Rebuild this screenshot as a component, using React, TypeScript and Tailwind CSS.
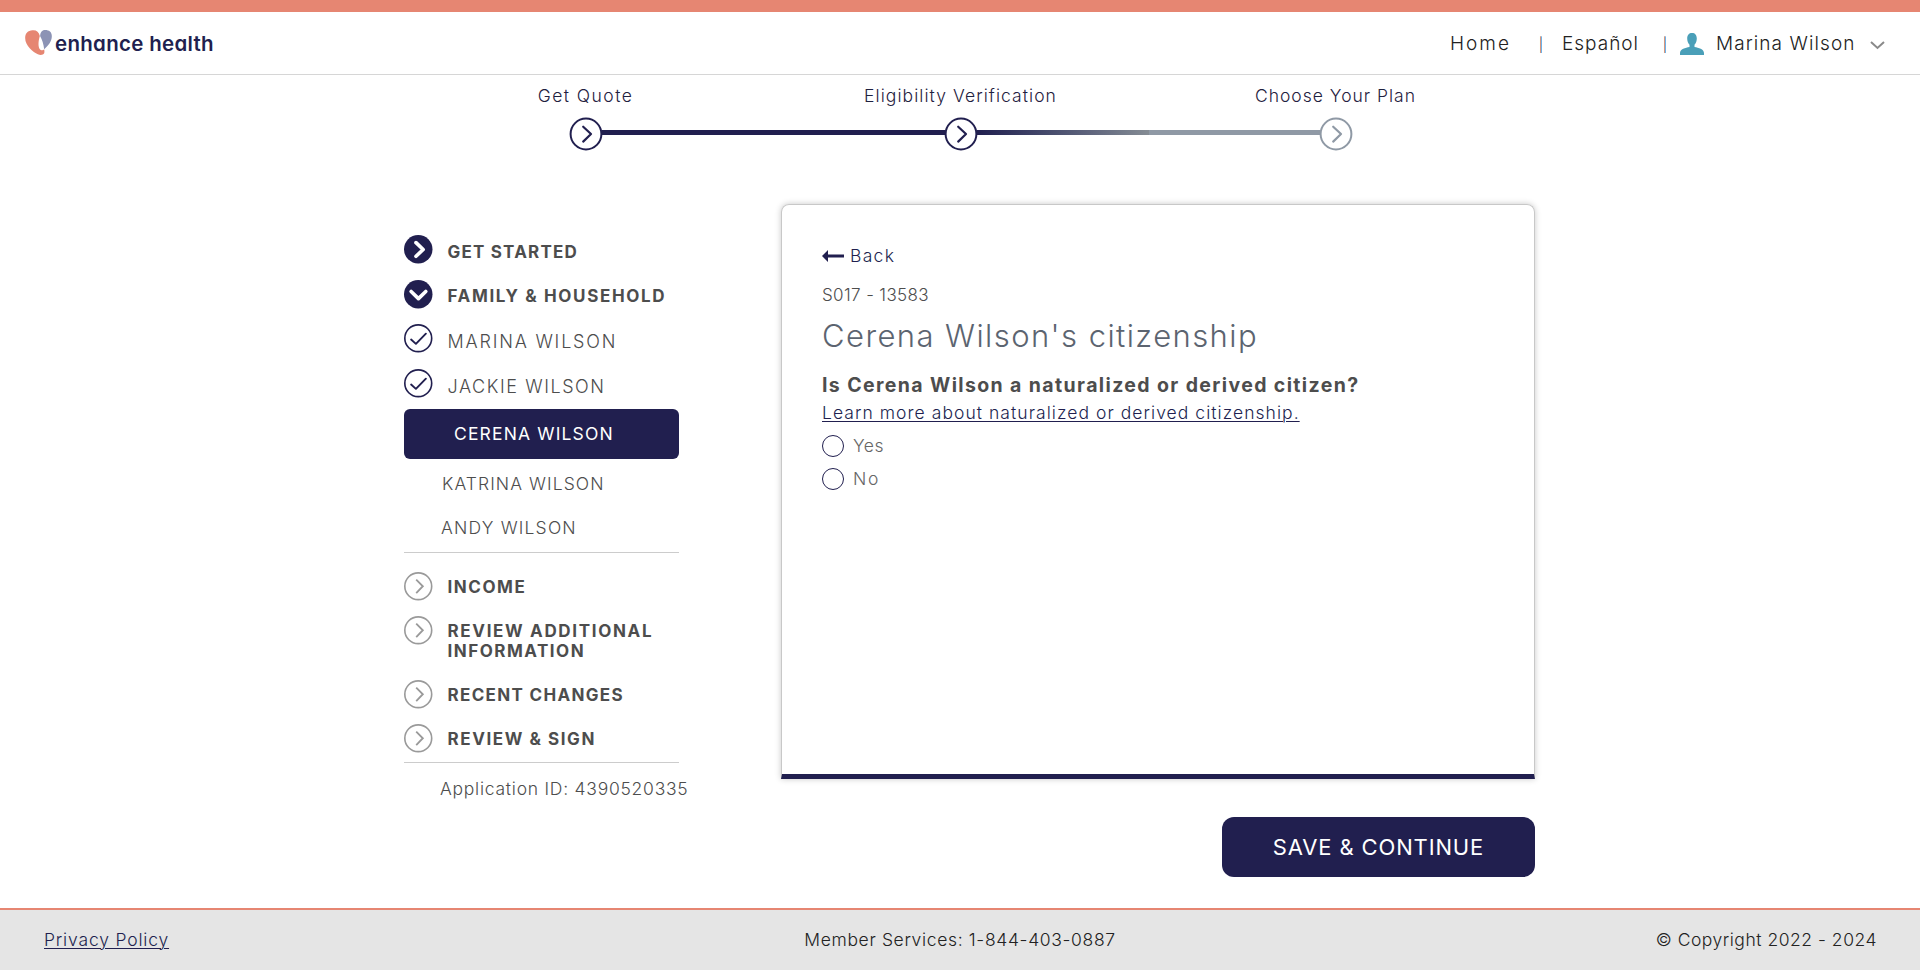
import type { ReactNode } from "react";

function Logo() {
  return (
    <div className="ml-[25px] flex items-center">
      <svg width="27" height="25" viewBox="0 0 80 75" className="mb-[2px] shrink-0">
        <path d="M22 1C8 2 0 10 0 24c0 24 24 42 38 49 8 3 16 2 19-3 1-4 1-7 0-12-3 4-10 4-14-2-5-9-3-25 1-38C41 6 34 0 22 1Z" fill="#e68672" />
        <path d="M60 0C50 0 45 8 45 19c6 10 10 24 12 39C70 46 80 34 80 18 80 6 72 0 60 0Z" fill="#8c93b5" />
      </svg>
      <span className="ml-[3px] pt-px text-[20.5px] leading-6 font-semibold tracking-[0.3px] text-[#211f4f] [font-feature-settings:'cv11']">
        enhance health
      </span>
    </div>
  );
}

function Header() {
  return (
    <header className="flex h-[63px] items-center justify-between border-b border-[#d6d6d6] text-[18.5px] font-light text-[#222]">
      <Logo />
      <nav className="mr-[35px] flex items-center whitespace-nowrap">
        <a className="w-[88px] pt-[2px] text-[19px] tracking-[2px]">Home</a>
        <span className="flex w-[6px] justify-center pt-[2px] text-[14px] text-[#211f4f]">|</span>
        <a className="ml-[18px] w-[100px] pt-[2px] text-[19px] tracking-[1px]">Español</a>
        <span className="flex w-[6px] justify-center pt-[2px] text-[14px] text-[#211f4f]">|</span>
        <svg width="24" height="22" viewBox="0 0 24 22" className="mt-[2px] ml-[12px]">
          <path d="M12 0c3 0 4.800 2 4.800 5.500 0 2.500-.8 4.700-2.300 6.300v2.200c4 .9 9.500 2 9.500 6V22H0v-2c0-4 5.500-5.100 9.500-6v-2.200C8 10.200 7.200 8 7.200 5.500 7.200 2 9 0 12 0Z" fill="#4a9fb8" />
        </svg>
        <span className="ml-[12px] w-[154px] pt-[2px] text-[19px] tracking-[1.08px]">Marina Wilson</span>
        <svg width="15" height="9" viewBox="0 0 15 9" className="mt-[4px]" fill="none" stroke="#8a8a8a" strokeWidth="2">
          <path d="M1 1l6.500 6L14 1" />
        </svg>
      </nav>
    </header>
  );
}

function StepCircle({ color }: { color: string }) {
  return (
    <svg width="34" height="34" viewBox="0 0 34 34" className="shrink-0" fill="none" stroke={color}>
      <circle cx="17" cy="17" r="15.400" strokeWidth="2" />
      <path d="M14.200 9.700l7.800 7.300-7.800 7.600" strokeWidth="2.200" strokeLinecap="round" strokeLinejoin="round" />
    </svg>
  );
}

function Stepper() {
  return (
    <section className="pt-[11px]">
      <div className="ml-[398px] flex h-[21px] w-[1125px] items-center text-center text-[17.5px] font-light text-[#1f2140]">
        <span className="w-[375px] tracking-[1.45px]">Get Quote</span>
        <span className="w-[375px] tracking-[1.06px]">Eligibility Verification</span>
        <span className="w-[375px] tracking-[1px]">Choose Your Plan</span>
      </div>
      <div className="mt-[10px] ml-[569px] flex h-[34px]">
        <StepCircle color="#211f4f" />
        <div className="-mx-px mt-[13px] h-[5px] w-[343px] bg-[#211f4f]" />
        <StepCircle color="#211f4f" />
        <div className="-mx-px mt-[13px] flex h-[5px] w-[343px]">
          <div className="w-1/2 bg-linear-to-r from-[#211f4f] to-[#858c94]" />
          <div className="w-1/2 bg-[#8f99a5]" />
        </div>
        <StepCircle color="#8f99a5" />
      </div>
    </section>
  );
}

type IconKind = "right" | "down" | "check" | "pending";

function StatusIcon({ kind }: { kind: IconKind }) {
  const solid = kind === "right" || kind === "down";
  const color = kind === "pending" ? "#9a9a9a" : "#211f4f";
  return (
    <svg width="28.500" height="28.500" viewBox="0 0 28 28" className="shrink-0" fill="none" strokeLinecap="round" strokeLinejoin="round">
      {solid ? <circle cx="14" cy="14" r="14" fill={color} /> : <circle cx="14" cy="14" r="13.200" stroke={color} strokeWidth="1.600" />}
      {kind === "right" && <path d="M11.800 7.500l7 6.700-7 6.700" stroke="#fff" strokeWidth="3.600" />}
      {kind === "down" && <path d="M7 11.300l7.200 7 7.200-7" stroke="#fff" strokeWidth="3.600" />}
      {kind === "check" && <path d="M7 15.300l4.700 4.200L21.500 9.500" stroke={color} strokeWidth="1.900" />}
      {kind === "pending" && <path d="M12 7.500l6.500 6.500-6.500 6.700" stroke={color} strokeWidth="1.800" strokeLinecap="butt" strokeLinejoin="miter" />}
    </svg>
  );
}

function NavRow({ kind, className, label, children }: { kind: IconKind; className: string; label: string; children: ReactNode }) {
  return (
    <div className={`flex items-start ${className}`}>
      <StatusIcon kind={kind} />
      <span className={`ml-[15px] leading-5 whitespace-nowrap ${label}`}>{children}</span>
    </div>
  );
}

function Sidebar() {
  return (
    <aside className="mt-[31px] ml-[404px] w-[275px] shrink-0 text-[#4d4d4d]">
      <NavRow kind="right" className="h-[45px]" label="pt-[7px] text-[17px] font-bold tracking-[1.2px]">GET STARTED</NavRow>
      <NavRow kind="down" className="h-[44px]" label="pt-[6px] text-[17px] font-bold tracking-[1.64px]">FAMILY &amp; HOUSEHOLD</NavRow>
      <NavRow kind="check" className="h-[45px]" label="pt-[8px] text-[18px] font-light tracking-[1.8px]">MARINA WILSON</NavRow>
      <NavRow kind="check" className="h-[40px]" label="pt-[8px] text-[18px] font-light tracking-[1.57px]">JACKIE WILSON</NavRow>
      <div className="flex h-[50px] items-center rounded-md bg-[#211f4f] pl-[50px] text-[17.5px] tracking-[1.15px] text-white">CERENA WILSON</div>
      <div className="flex h-[50px] items-center pl-[38px] text-[17.500px] font-light tracking-[1.08px]">KATRINA WILSON</div>
      <div className="flex h-[38px] items-center pl-[37px] text-[17.500px] font-light tracking-[1.2px]">ANDY WILSON</div>
      <div className="mt-[5px] mb-[19px] h-px bg-[#cccccc]" />
      <NavRow kind="pending" className="h-[44px]" label="pt-[5px] text-[17px] font-bold tracking-[1.55px]">INCOME</NavRow>
      <NavRow kind="pending" className="h-[64px]" label="pt-[5px] text-[17px] font-bold tracking-[1.66px]">
        REVIEW ADDITIONAL
        <br />
        <span className="tracking-[1.5px]">INFORMATION</span>
      </NavRow>
      <NavRow kind="pending" className="h-[44px]" label="pt-[5px] text-[17px] font-bold tracking-[1.33px]">RECENT CHANGES</NavRow>
      <NavRow kind="pending" className="h-[38px]" label="pt-[5px] text-[17px] font-bold tracking-[1.57px]">REVIEW &amp; SIGN</NavRow>
      <div className="h-px bg-[#cccccc]" />
      <div className="flex h-[53px] items-center pl-[36px] text-[17.5px] font-light tracking-[0.75px] whitespace-nowrap">Application ID: 4390520335</div>
    </aside>
  );
}

function Option({ label, className }: { label: string; className: string }) {
  return (
    <label className={`flex h-[22px] items-center text-[17.5px] font-light text-[#666] ${className}`}>
      <span className="mr-[9px] size-[22px] rounded-full border border-[#211f4f]" />
      <span className="pt-px">{label}</span>
    </label>
  );
}

function QuestionCard() {
  return (
    <div className="h-[575px] rounded-t-lg border border-b-[5px] border-[#c8c8c8] border-b-[#211f4f] pt-[41px] pl-[40px] whitespace-nowrap text-[#4d4d4d] shadow-[0_0_6px_rgba(0,0,0,0.22)]">
      <div className="flex h-5 items-center text-[17.5px] font-light text-[#211f4f]">
        <svg width="22" height="12" viewBox="0 0 22 12" fill="#211f4f" className="shrink-0">
          <path d="M0 6L6 0v4.500h16v3H6V12Z" />
        </svg>
        <span className="ml-[6px] leading-5 tracking-[1.3px]">Back</span>
      </div>
      <div className="mt-[19px] h-5 text-[17px] leading-5 font-light tracking-[0.38px]">S017 - 13583</div>
      <h1 className="mt-[11px] h-10 text-[31px] leading-10 font-light tracking-[1.42px] text-[#5c6470]">Cerena Wilson's citizenship</h1>
      <h2 className="mt-[19px] h-5 text-[19.5px] leading-5 font-bold tracking-[1.38px]">Is Cerena Wilson a naturalized or derived citizen?</h2>
      <a className="mt-[8px] block h-5 text-[17.500px] leading-5 font-light tracking-[1.05px] text-[#211f4f] underline decoration-1 underline-offset-2">
        Learn more about naturalized or derived citizenship.
      </a>
      <Option label="Yes" className="mt-[12px] tracking-[0.5px]" />
      <Option label="No" className="mt-[11px] tracking-[1.6px]" />
    </div>
  );
}

export default function App() {
  return (
    <div className="flex h-[970px] w-[1920px] flex-col overflow-hidden bg-white font-['Inter',sans-serif]">
      <div className="h-[12px] shrink-0 bg-[#e68672]" />
      <Header />
      <Stepper />
      <main className="mt-[53px] flex flex-1 items-start">
        <Sidebar />
        <section className="ml-[102px] flex w-[754px] flex-col">
          <QuestionCard />
          <button className="mt-[38px] h-[60px] w-[313px] self-end rounded-xl bg-[#211f4f] text-[22px] tracking-[0.86px] text-white">
            SAVE &amp; CONTINUE
          </button>
        </section>
      </main>
      <footer className="grid h-[62px] shrink-0 grid-cols-3 items-center border-t-2 border-[#e68672] bg-[#e5e5e5] px-[43px] text-[17.500px] font-light text-[#222]">
        <a className="pl-px tracking-[0.83px] text-[#211f4f] underline decoration-1 underline-offset-2">Privacy Policy</a>
        <span className="text-center tracking-[0.65px]">Member Services: 1-844-403-0887</span>
        <span className="text-right tracking-[0.52px]">© Copyright 2022 - 2024</span>
      </footer>
    </div>
  );
}
